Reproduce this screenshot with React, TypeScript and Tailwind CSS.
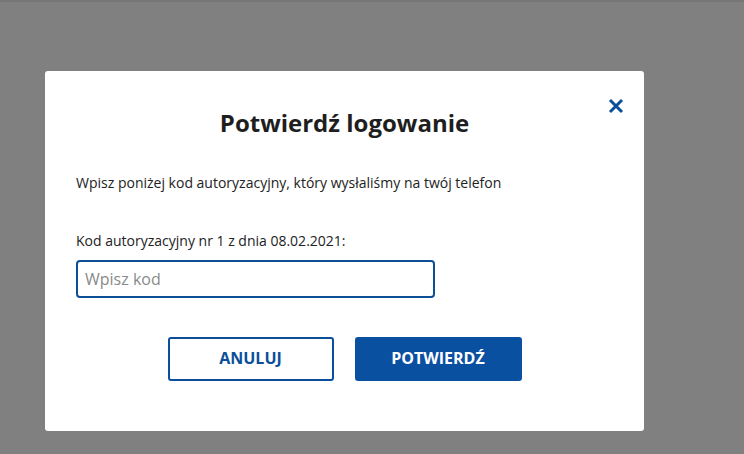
import React from "react";

export default function App() {
  return (
    <div
      className="w-[744px] h-[454px] bg-[#808080] border-t-2 border-[#777777] pt-[69px] pl-[45px] overflow-hidden"
      style={{ fontFamily: '"Open Sans", "Noto Sans", sans-serif' }}
    >
      <div className="relative w-[599px] h-[360px] bg-white rounded-[3px] flex flex-col pl-[31px] pt-[37px] text-[#222222]">
        <button className="absolute top-[26px] right-[19px] w-[18px] h-[18px] flex items-center justify-center">
          <svg width="16" height="16" viewBox="0 0 16 16">
            <path d="M2 2 L14 14 M14 2 L2 14" stroke="#0b4f9a" strokeWidth="3" strokeLinecap="butt" />
          </svg>
        </button>
        <h1 className="text-[24px] leading-[30px] font-bold text-center pr-[31px] text-[#1e1e1e]">
          Potwierdź logowanie
        </h1>
        <p className="mt-[35px] text-[14px] leading-[20px]">
          Wpisz poniżej kod autoryzacyjny, który wysłaliśmy na twój telefon
        </p>
        <label className="mt-[38px] text-[14px] leading-[20px]">
          Kod autoryzacyjny nr 1 z dnia 08.02.2021:
        </label>
        <input
          className="mt-[9px] w-[359px] h-[38px] border-2 border-[#0b4f97] rounded-[4px] px-[7px] text-[16px] text-[#222] placeholder:text-[#8a8a8a] outline-none"
          placeholder="Wpisz kod"
        />
        <div className="mt-[39px] flex justify-center gap-[21px] pr-[31px]">
          <button className="w-[166px] h-[44px] border-2 border-[#0b4f9a] rounded-[3px] bg-white text-[#0b4f9a] text-[16px] font-bold pb-[3px]">
            ANULUJ
          </button>
          <button className="w-[167px] h-[44px] rounded-[3px] bg-[#0a50a1] text-white text-[16px] font-bold pb-[3px]">
            POTWIERDŹ
          </button>
        </div>
      </div>
    </div>
  );
}
